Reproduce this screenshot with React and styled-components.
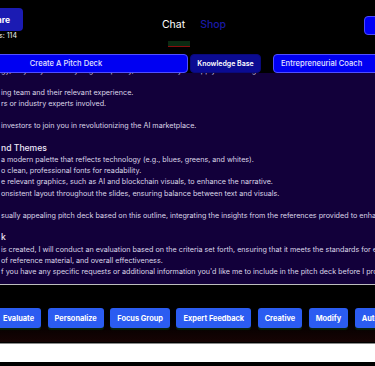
import styled, { createGlobalStyle } from "styled-components";

const GlobalStyle = createGlobalStyle`
  html, body {
    margin: 0;
    padding: 0;
    background: #000;
    overflow: hidden;
  }
  #root {
    width: 375px;
    height: 366px;
    overflow: hidden;
    font-family: Inter, "Liberation Sans", sans-serif;
  }
`;

const Page = styled.div`
  width: 500px;
  margin-left: -56px;
  display: flex;
  flex-direction: column;
  background: #000;
  color: #fff;
`;

const Header = styled.header`
  height: 50px;
  display: grid;
  grid-template-columns: 1fr auto 1fr;
  align-items: center;
  padding: 0 29px;
`;

const LeftGroup = styled.div`
  justify-self: start;
  display: flex;
  flex-direction: column;
  align-items: center;
  margin-top: -2px;
`;

const ShareButton = styled.button`
  height: 23px;
  padding: 0 13px;
  border: none;
  border-radius: 4px;
  background: #1b1bb3;
  color: #fff;
  font-family: inherit;
  font-size: 8.5px;
  font-weight: 700;
`;

const Credits = styled.div`
  font-size: 7px;
  color: #f2f2f2;
  line-height: 8px;
  margin-top: 1px;
`;

const Nav = styled.nav`
  display: flex;
  gap: 15px;
  align-items: center;
`;

const NavItem = styled.div`
  position: relative;
  font-size: 10.5px;
  line-height: 14px;
  color: ${(p) => (p.$active ? "#fff" : "#1a1aa6")};
  font-weight: ${(p) => (p.$active ? 400 : 500)};
`;

const Indicator = styled.span`
  position: absolute;
  left: 6px;
  top: 23px;
  width: 22px;
  height: 5px;
  background: #0b2a12;
  border-bottom: 1.5px solid #8a0d0d;
`;

const LogoutButton = styled.button`
  justify-self: end;
  height: 19px;
  padding: 0 11px;
  border: 1px solid #4a4aff;
  border-radius: 4px;
  background: #0000f5;
  color: #fff;
  font-family: inherit;
  font-size: 8px;
  font-weight: 700;
`;

const ModeRow = styled.div`
  display: flex;
  align-items: center;
  padding-top: 4px;
`;

const ModeButton = styled.button`
  height: 19px;
  width: ${(p) => p.$width || "auto"};
  margin-right: ${(p) => p.$gap || "0"};
  padding: ${(p) => (p.$pad ? p.$pad : "0 6px")};
  border: 1px solid ${(p) => (p.$dim ? "#0a0a7a" : "#5050ff")};
  border-radius: 4px;
  background: ${(p) => (p.$dim ? "#0b0b92" : "#0000f2")};
  color: ${(p) => (p.$dim ? "#fff" : "#e4e4ff")};
  font-family: inherit;
  font-size: ${(p) => (p.$dim ? "7px" : "7.6px")};
  font-weight: ${(p) => (p.$dim ? 600 : 500)};
  text-align: ${(p) => p.$align || "center"};
  white-space: nowrap;
`;

const Content = styled.section`
  height: 211px;
  overflow: hidden;
  background: #12003a;
  padding-left: 57px;
  color: #dcd6e8;
`;

const ContentInner = styled.div`
  margin-top: -8.5px;
  display: flex;
  flex-direction: column;
  gap: 11.2px;
`;

const Block = styled.div`
  display: flex;
  flex-direction: column;
`;

const Line = styled.div`
  font-size: 7.2px;
  line-height: 11.2px;
  white-space: nowrap;
`;

const Heading = styled.div`
  font-size: 8.6px;
  line-height: 11.2px;
  font-weight: 500;
  color: #eee8f8;
  white-space: nowrap;
`;

const Divider = styled.div`
  height: 1px;
  background: #bdbdbd;
`;

const Footer = styled.footer`
  display: flex;
  flex-direction: column;
  background: #000;
`;

const ActionRow = styled.div`
  display: flex;
  gap: 6.5px;
  padding: 23px 0 14px 52px;
  background: linear-gradient(#000 0%, #000 60%, #160303 100%);
`;

const ActionButton = styled.button`
  height: 20px;
  padding: 0 7px;
  border: none;
  border-radius: 3px;
  background: #2b5cf1;
  color: #fff;
  font-family: inherit;
  font-size: 7.4px;
  font-weight: 700;
  white-space: nowrap;
  box-shadow: 0 1.5px 1px #08220c;
`;

const InputBar = styled.div`
  height: 18px;
  margin-top: 1px;
  background: #fff;
  border-top: 1px solid #8a8a8a;
`;

const actions = [
  "Evaluate",
  "Personalize",
  "Focus Group",
  "Expert Feedback",
  "Creative",
  "Modify",
  "Automate",
];

export default function App() {
  return (
    <>
      <GlobalStyle />
      <Page>
        <Header>
          <LeftGroup>
            <ShareButton>Share</ShareButton>
            <Credits>Credits: 114</Credits>
          </LeftGroup>
          <Nav>
            <NavItem $active>
              Chat
              <Indicator />
            </NavItem>
            <NavItem>Shop</NavItem>
          </Nav>
          <LogoutButton>Logout</LogoutButton>
        </Header>

        <ModeRow>
          <ModeButton $width="244px" $gap="2px">
            Create A Pitch Deck
          </ModeButton>
          <ModeButton $dim $width="71px" $gap="12px">
            Knowledge Base
          </ModeButton>
          <ModeButton $pad="0 40px 0 7px" $align="left">
            Entrepreneurial Coach
          </ModeButton>
        </ModeRow>

        <Content>
          <ContentInner>
            <Block>
              <Line>gy, why they are ready to grow quickly, and how they will apply the funding.</Line>
            </Block>
            <Block>
              <Line>ing team and their relevant experience.</Line>
              <Line>rs or industry experts involved.</Line>
            </Block>
            <Block>
              <Line>investors to join you in revolutionizing the AI marketplace.</Line>
            </Block>
            <Block>
              <Heading>nd Themes</Heading>
              <Line>a modern palette that reflects technology (e.g., blues, greens, and whites).</Line>
              <Line>o clean, professional fonts for readability.</Line>
              <Line>e relevant graphics, such as AI and blockchain visuals, to enhance the narrative.</Line>
              <Line>onsistent layout throughout the slides, ensuring balance between text and visuals.</Line>
            </Block>
            <Block>
              <Line>sually appealing pitch deck based on this outline, integrating the insights from the references provided to enhance its impact.</Line>
            </Block>
            <Block>
              <Heading>k</Heading>
              <Line>is created, I will conduct an evaluation based on the criteria set forth, ensuring that it meets the standards for effective communication,</Line>
              <Line>of reference material, and overall effectiveness.</Line>
              <Line>f you have any specific requests or additional information you'd like me to include in the pitch deck before I proceed!</Line>
            </Block>
          </ContentInner>
        </Content>

        <Divider />

        <Footer>
          <ActionRow>
            {actions.map((label) => (
              <ActionButton key={label}>{label}</ActionButton>
            ))}
          </ActionRow>
          <InputBar />
        </Footer>
      </Page>
    </>
  );
}
